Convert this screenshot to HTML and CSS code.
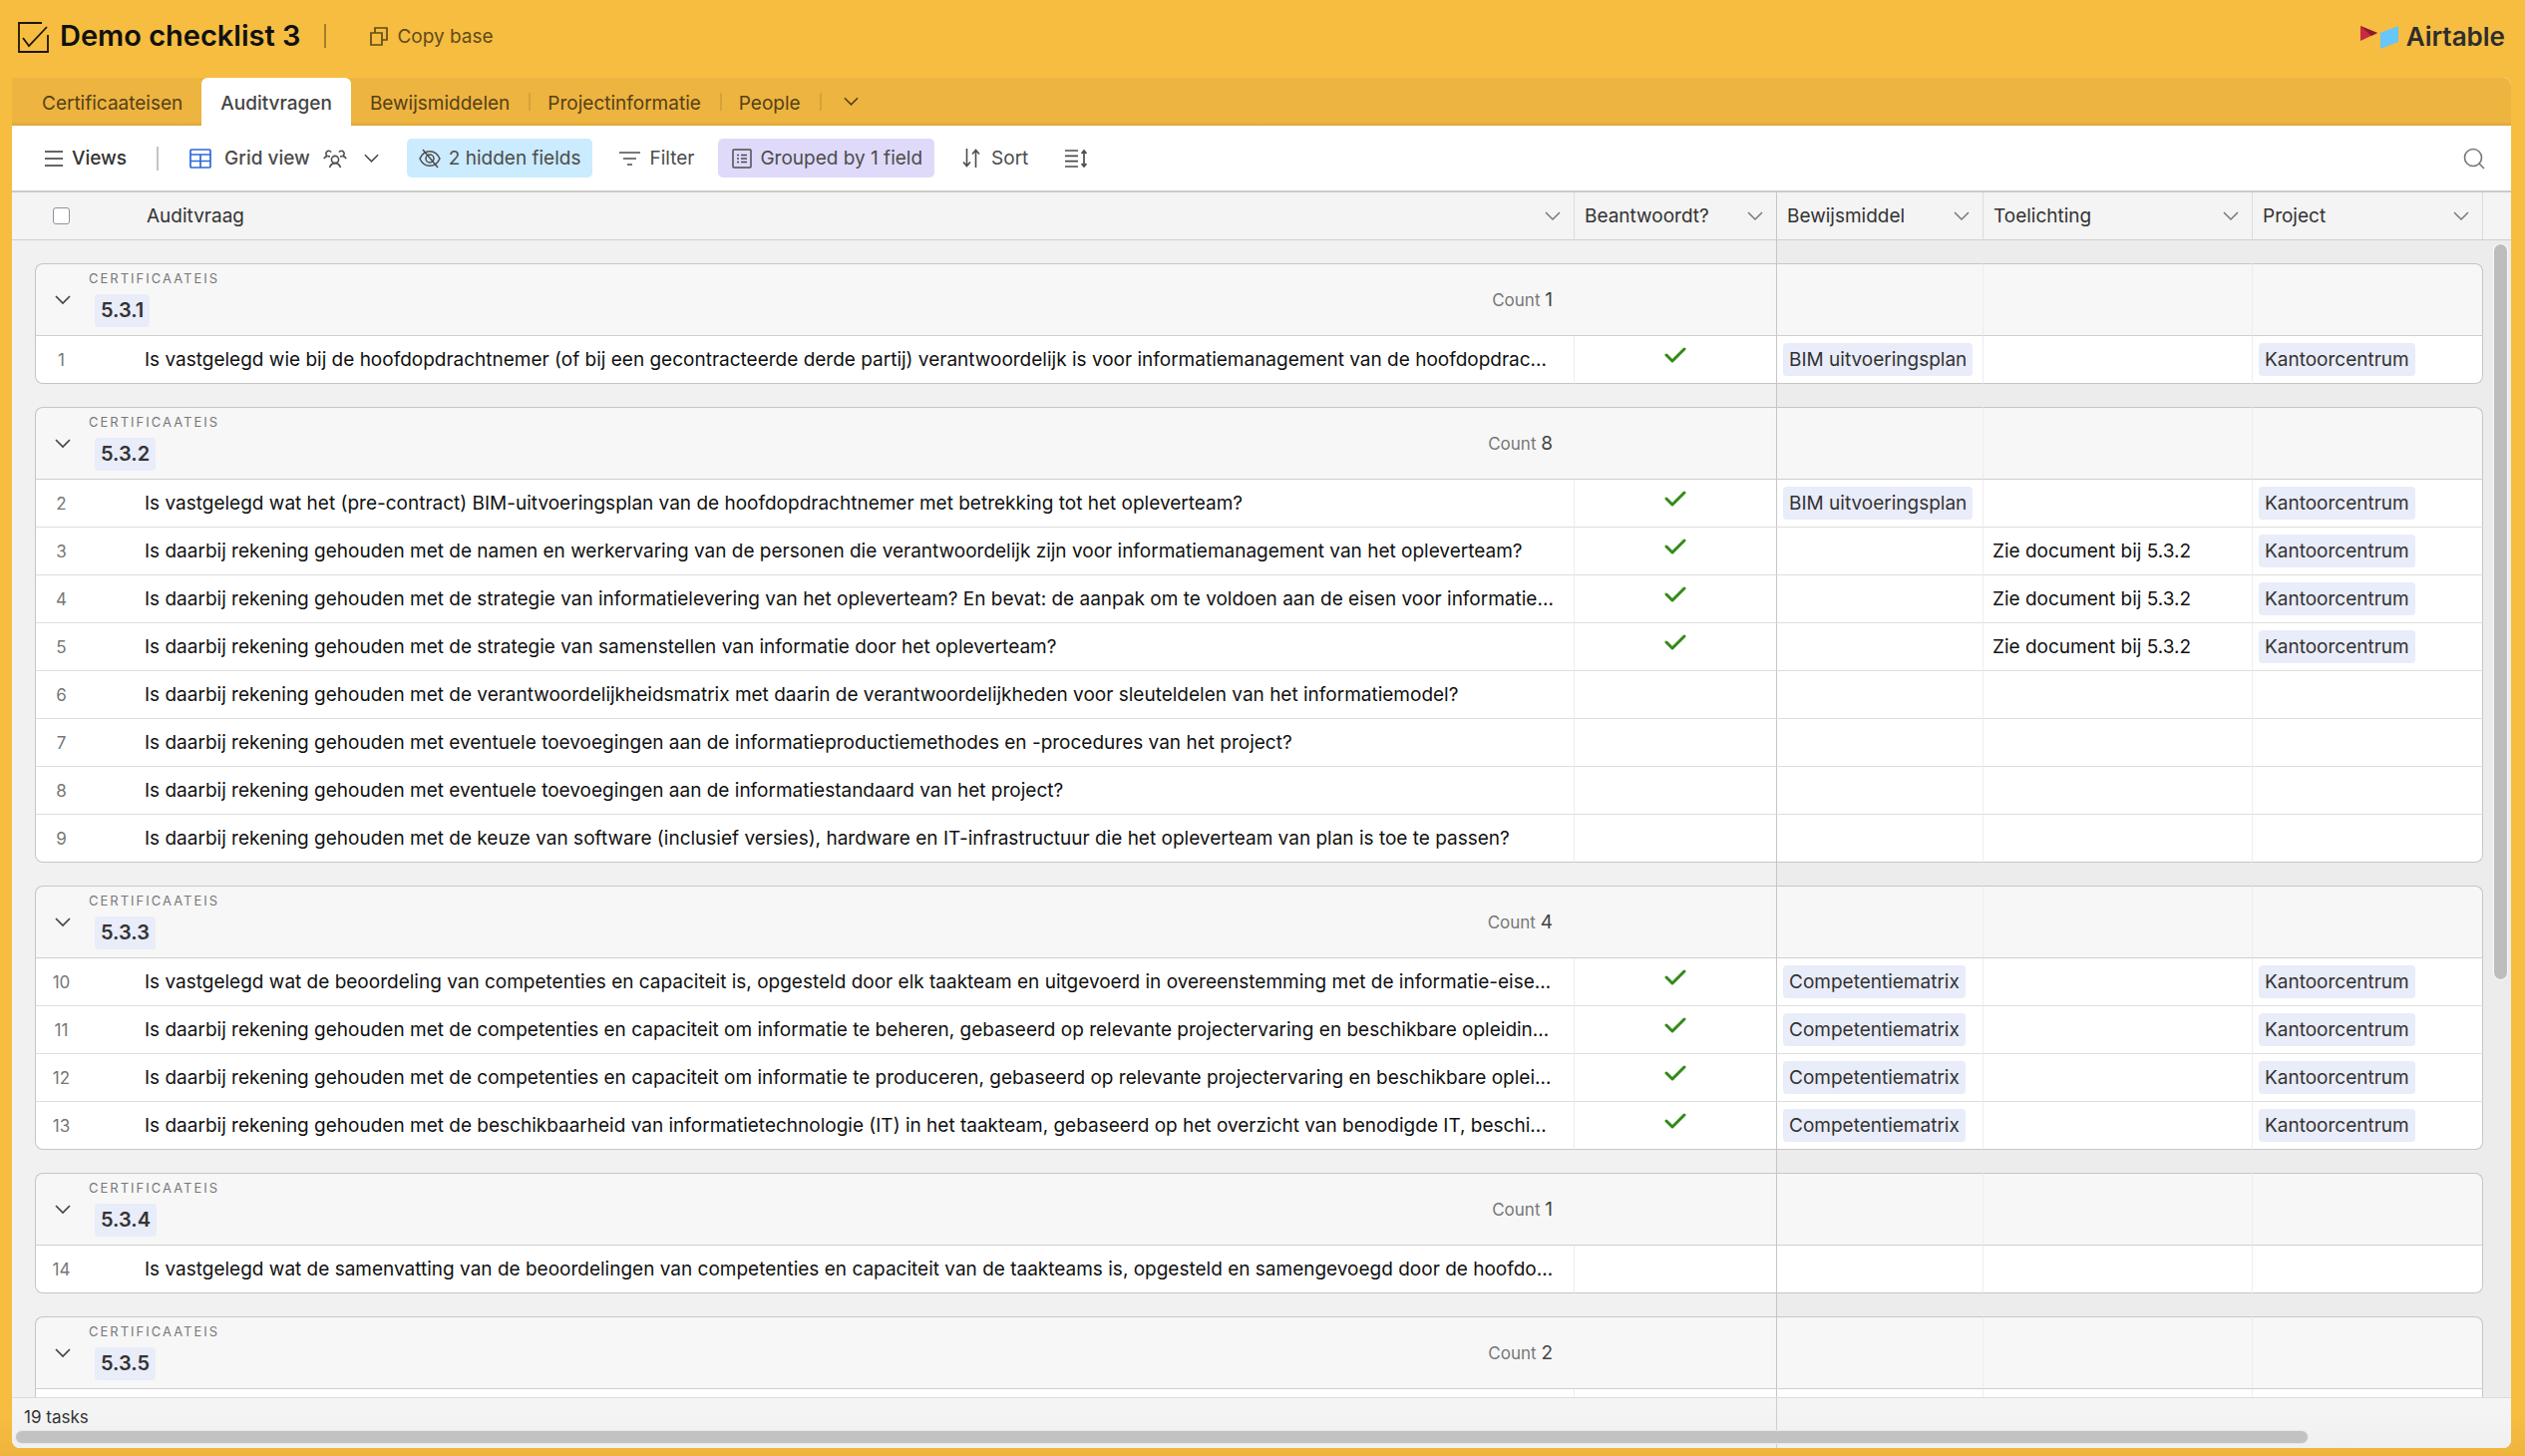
FILE: index.html
```html
<!DOCTYPE html>
<html lang="nl">
<head>
<meta charset="utf-8">
<meta name="viewport" content="width=device-width, initial-scale=1">
<title>Demo checklist 3</title>
<link rel="stylesheet" href="styles.css">
</head>
<body>
<svg class="sprite" aria-hidden="true">
  <symbol id="chevron" viewBox="0 0 16 10"><path d="M1 1l7 7 7-7" fill="none" stroke="currentColor" stroke-width="1.700"/></symbol>
  <symbol id="chevron-thin" viewBox="0 0 16 10"><path d="M1 1l7 7 7-7" fill="none" stroke="currentColor" stroke-width="1.500"/></symbol>
</svg>

<header class="topbar">
  <svg class="base-icon" viewBox="0 0 32 32" fill="none" stroke="currentColor" stroke-width="1.800" aria-hidden="true"><path d="M25 2H2v29h29V14"/><path d="M6 17l6 8L30 6"/></svg>
  <h1 class="base-name">Demo checklist 3</h1>
  <span class="topbar-rule"></span>
  <button class="copy" type="button">
    <svg width="18" height="20" viewBox="0 0 18 20" fill="none" stroke="currentColor" stroke-width="1.700" aria-hidden="true"><path d="M1 6h11v12H1zM5 6V1h12v12h-5"/></svg>
    Copy base
  </button>
  <a class="brand" href="#">
    <svg width="38" height="23" viewBox="0 0 38 23" aria-hidden="true"><path d="M0 0l17 7L0 15z" fill="#c92a42"/><path d="M0 0l17 7-6 3z" fill="#8b1c2c"/><path d="M20 7l18-7v16l-18 7z" fill="#67c6fb"/></svg>
    Airtable
  </a>
</header>

<div class="frame">
  <nav class="tabs" aria-label="Tables">
    <a class="tab" href="#">Certificaateisen</a>
    <a class="tab tab-active" href="#" aria-current="page">Auditvragen</a>
    <a class="tab" href="#">Bewijsmiddelen</a>
    <a class="tab tab-ruled" href="#">Projectinformatie</a>
    <a class="tab tab-ruled" href="#">People</a>
    <button class="tab tab-ruled tab-more" type="button" aria-label="More tables"><svg width="15" height="10"><use href="#chevron"/></svg></button>
  </nav>

  <div class="toolbar">
    <button class="tool tool-views" type="button">
      <svg width="18" height="16" viewBox="0 0 18 16" stroke="#666" stroke-width="2" aria-hidden="true"><path d="M0 1h18M0 8h18M0 15h18"/></svg>
      Views
    </button>
    <span class="toolbar-rule"></span>
    <button class="tool tool-grid" type="button">
      <svg class="grid-glyph" width="22" height="20" viewBox="0 0 22 20" fill="none" stroke="currentColor" stroke-width="1.700" aria-hidden="true"><rect x="1" y="1" width="20" height="18" rx="1"/><path d="M1 6h20M1 12.500h20M11 6v13"/></svg>
      <span class="tool-name">Grid view</span>
      <svg width="24" height="20" viewBox="0 0 24 20" fill="none" stroke="currentColor" stroke-width="1.600" aria-hidden="true"><circle cx="12" cy="11" r="3.600"/><path d="M6.500 19c1-3 3-4.400 5.500-4.400s4.500 1.400 5.500 4.400"/><path d="M8 3.500A2.800 2.800 0 1 0 4.500 7.600C3 7.600 1.600 8.500.8 10M5 7.600l2 .4M16 3.500a2.800 2.800 0 1 1 3.500 4.100c1.500 0 2.900.9 3.700 2.400M19 7.600l-2 .4"/></svg>
      <svg class="grid-caret" width="15" height="10"><use href="#chevron"/></svg>
    </button>
    <button class="tool tool-hidden" type="button">
      <svg width="22" height="20" viewBox="0 0 22 20" fill="none" stroke="currentColor" stroke-width="1.500" aria-hidden="true"><path d="M1 10c2-4.500 5.600-7.300 10-7.300S19 5.500 21 10c-2 4.500-5.600 7.300-10 7.300S3 14.500 1 10z"/><circle cx="11" cy="10" r="4"/><path d="M4 1l15 18"/></svg>
      2 hidden fields
    </button>
    <button class="tool tool-filter" type="button">
      <svg width="22" height="14" viewBox="0 0 22 14" stroke="currentColor" stroke-width="1.700" aria-hidden="true"><path d="M0 1h21M4 7h13M8 13h5"/></svg>
      Filter
    </button>
    <button class="tool tool-group" type="button">
      <svg width="20" height="20" viewBox="0 0 20 20" fill="none" stroke="currentColor" stroke-width="1.500" aria-hidden="true"><rect x="1" y="1" width="18" height="18" rx="1"/><path d="M5 6.500h2M9 6.500h6M5 10h2M9 10h6M5 13.500h2M9 13.500h6"/></svg>
      Grouped by 1 field
    </button>
    <button class="tool tool-sort" type="button">
      <svg width="18" height="19" viewBox="0 0 18 19" fill="none" stroke="currentColor" stroke-width="1.600" aria-hidden="true"><path d="M4.500 0v17M1 13.500l3.500 4 3.500-4M13.500 19V2M10 5.500l3.500-4 3.500 4"/></svg>
      Sort
    </button>
    <button class="tool tool-height" type="button" aria-label="Row height">
      <svg width="22" height="18" viewBox="0 0 22 18" fill="none" stroke="currentColor" stroke-width="1.700" aria-hidden="true"><path d="M0 1h13M0 6.300h13M0 11.600h13M0 17h13M19 1v16M16.500 4L19 1l2.500 3M16.500 14l2.500 3 2.500-3"/></svg>
    </button>
    <button class="search" type="button" aria-label="Search">
      <svg width="22" height="22" viewBox="0 0 22 22" fill="none" stroke="currentColor" stroke-width="1.600" aria-hidden="true"><circle cx="10" cy="10" r="8.500"/><path d="M16 16l5 5"/></svg>
    </button>
  </div>

  <main class="grid">
    <table class="records">
      <colgroup><col class="c-num"><col><col class="c-done"><col class="c-proof"><col class="c-note"><col class="c-project"></colgroup>
      <thead>
        <tr>
          <th class="pick"><input class="box" type="checkbox" aria-label="Select all"></th>
          <th class="h-question"><div class="head">Auditvraag<button type="button" aria-label="Auditvraag menu"><svg width="16" height="10"><use href="#chevron-thin"/></svg></button></div></th>
          <th class="ruled"><div class="head">Beantwoordt?<button type="button" aria-label="Beantwoordt menu"><svg width="16" height="10"><use href="#chevron-thin"/></svg></button></div></th>
          <th class="frozen"><div class="head">Bewijsmiddel<button type="button" aria-label="Bewijsmiddel menu"><svg width="16" height="10"><use href="#chevron-thin"/></svg></button></div></th>
          <th class="ruled"><div class="head">Toelichting<button type="button" aria-label="Toelichting menu"><svg width="16" height="10"><use href="#chevron-thin"/></svg></button></div></th>
          <th class="ruled h-last"><div class="head">Project<button type="button" aria-label="Project menu"><svg width="16" height="10"><use href="#chevron-thin"/></svg></button></div></th>
        </tr>
      </thead>

      <tbody>
        <tr class="gap"><td colspan="3"></td><td colspan="3"></td></tr>
        <tr class="group">
          <td colspan="2"><div class="group-head"><button type="button" aria-label="Collapse 5.3.1"><svg width="16" height="10"><use href="#chevron"/></svg></button><div class="group-id"><span class="caption">Certificaateis</span><span class="tag tag-group">5.3.1</span></div><span class="count">Count <b>1</b></span></div></td>
          <td></td><td></td><td></td><td></td>
        </tr>
        <tr class="row"><td>1</td><td>Is vastgelegd wie bij de hoofdopdrachtnemer (of bij een gecontracteerde derde partij) verantwoordelijk is voor informatiemanagement van de hoofdopdrac…</td><td><input class="tick" type="checkbox" checked aria-label="Beantwoordt 1"></td><td><span class="tag">BIM uitvoeringsplan</span></td><td></td><td><span class="tag">Kantoorcentrum</span></td></tr>
      </tbody>

      <tbody>
        <tr class="gap"><td colspan="3"></td><td colspan="3"></td></tr>
        <tr class="group">
          <td colspan="2"><div class="group-head"><button type="button" aria-label="Collapse 5.3.2"><svg width="16" height="10"><use href="#chevron"/></svg></button><div class="group-id"><span class="caption">Certificaateis</span><span class="tag tag-group">5.3.2</span></div><span class="count">Count <b>8</b></span></div></td>
          <td></td><td></td><td></td><td></td>
        </tr>
        <tr class="row"><td>2</td><td>Is vastgelegd wat het (pre-contract) BIM-uitvoeringsplan van de hoofdopdrachtnemer met betrekking tot het opleverteam?</td><td><input class="tick" type="checkbox" checked aria-label="Beantwoordt 2"></td><td><span class="tag">BIM uitvoeringsplan</span></td><td></td><td><span class="tag">Kantoorcentrum</span></td></tr>
        <tr class="row"><td>3</td><td>Is daarbij rekening gehouden met de namen en werkervaring van de personen die verantwoordelijk zijn voor informatiemanagement van het opleverteam?</td><td><input class="tick" type="checkbox" checked aria-label="Beantwoordt 3"></td><td></td><td>Zie document bij 5.3.2</td><td><span class="tag">Kantoorcentrum</span></td></tr>
        <tr class="row"><td>4</td><td>Is daarbij rekening gehouden met de strategie van informatielevering van het opleverteam? En bevat: de aanpak om te voldoen aan de eisen voor informatie…</td><td><input class="tick" type="checkbox" checked aria-label="Beantwoordt 4"></td><td></td><td>Zie document bij 5.3.2</td><td><span class="tag">Kantoorcentrum</span></td></tr>
        <tr class="row"><td>5</td><td>Is daarbij rekening gehouden met de strategie van samenstellen van informatie door het opleverteam?</td><td><input class="tick" type="checkbox" checked aria-label="Beantwoordt 5"></td><td></td><td>Zie document bij 5.3.2</td><td><span class="tag">Kantoorcentrum</span></td></tr>
        <tr class="row"><td>6</td><td>Is daarbij rekening gehouden met de verantwoordelijkheidsmatrix met daarin de verantwoordelijkheden voor sleuteldelen van het informatiemodel?</td><td><input class="tick" type="checkbox" aria-label="Beantwoordt 6"></td><td></td><td></td><td></td></tr>
        <tr class="row"><td>7</td><td>Is daarbij rekening gehouden met eventuele toevoegingen aan de informatieproductiemethodes en -procedures van het project?</td><td><input class="tick" type="checkbox" aria-label="Beantwoordt 7"></td><td></td><td></td><td></td></tr>
        <tr class="row"><td>8</td><td>Is daarbij rekening gehouden met eventuele toevoegingen aan de informatiestandaard van het project?</td><td><input class="tick" type="checkbox" aria-label="Beantwoordt 8"></td><td></td><td></td><td></td></tr>
        <tr class="row"><td>9</td><td>Is daarbij rekening gehouden met de keuze van software (inclusief versies), hardware en IT-infrastructuur die het opleverteam van plan is toe te passen?</td><td><input class="tick" type="checkbox" aria-label="Beantwoordt 9"></td><td></td><td></td><td></td></tr>
      </tbody>

      <tbody>
        <tr class="gap"><td colspan="3"></td><td colspan="3"></td></tr>
        <tr class="group">
          <td colspan="2"><div class="group-head"><button type="button" aria-label="Collapse 5.3.3"><svg width="16" height="10"><use href="#chevron"/></svg></button><div class="group-id"><span class="caption">Certificaateis</span><span class="tag tag-group">5.3.3</span></div><span class="count">Count <b>4</b></span></div></td>
          <td></td><td></td><td></td><td></td>
        </tr>
        <tr class="row"><td>10</td><td>Is vastgelegd wat de beoordeling van competenties en capaciteit is, opgesteld door elk taakteam en uitgevoerd in overeenstemming met de informatie-eise…</td><td><input class="tick" type="checkbox" checked aria-label="Beantwoordt 10"></td><td><span class="tag">Competentiematrix</span></td><td></td><td><span class="tag">Kantoorcentrum</span></td></tr>
        <tr class="row"><td>11</td><td>Is daarbij rekening gehouden met de competenties en capaciteit om informatie te beheren, gebaseerd op relevante projectervaring en beschikbare opleidin…</td><td><input class="tick" type="checkbox" checked aria-label="Beantwoordt 11"></td><td><span class="tag">Competentiematrix</span></td><td></td><td><span class="tag">Kantoorcentrum</span></td></tr>
        <tr class="row"><td>12</td><td>Is daarbij rekening gehouden met de competenties en capaciteit om informatie te produceren, gebaseerd op relevante projectervaring en beschikbare oplei…</td><td><input class="tick" type="checkbox" checked aria-label="Beantwoordt 12"></td><td><span class="tag">Competentiematrix</span></td><td></td><td><span class="tag">Kantoorcentrum</span></td></tr>
        <tr class="row"><td>13</td><td>Is daarbij rekening gehouden met de beschikbaarheid van informatietechnologie (IT) in het taakteam, gebaseerd op het overzicht van benodigde IT, beschi…</td><td><input class="tick" type="checkbox" checked aria-label="Beantwoordt 13"></td><td><span class="tag">Competentiematrix</span></td><td></td><td><span class="tag">Kantoorcentrum</span></td></tr>
      </tbody>

      <tbody>
        <tr class="gap"><td colspan="3"></td><td colspan="3"></td></tr>
        <tr class="group">
          <td colspan="2"><div class="group-head"><button type="button" aria-label="Collapse 5.3.4"><svg width="16" height="10"><use href="#chevron"/></svg></button><div class="group-id"><span class="caption">Certificaateis</span><span class="tag tag-group">5.3.4</span></div><span class="count">Count <b>1</b></span></div></td>
          <td></td><td></td><td></td><td></td>
        </tr>
        <tr class="row"><td>14</td><td>Is vastgelegd wat de samenvatting van de beoordelingen van competenties en capaciteit van de taakteams is, opgesteld en samengevoegd door de hoofdo…</td><td><input class="tick" type="checkbox" aria-label="Beantwoordt 14"></td><td></td><td></td><td></td></tr>
      </tbody>

      <tbody>
        <tr class="gap"><td colspan="3"></td><td colspan="3"></td></tr>
        <tr class="group">
          <td colspan="2"><div class="group-head"><button type="button" aria-label="Collapse 5.3.5"><svg width="16" height="10"><use href="#chevron"/></svg></button><div class="group-id"><span class="caption">Certificaateis</span><span class="tag tag-group">5.3.5</span></div><span class="count">Count <b>2</b></span></div></td>
          <td></td><td></td><td></td><td></td>
        </tr>
        <tr class="row"><td></td><td></td><td></td><td></td><td></td><td></td></tr>
      </tbody>
    </table>
    <div class="scroll-y"></div>
  </main>

  <footer class="summary">
    <span>19 tasks</span>
    <div class="scroll-x"></div>
  </footer>
</div>
</body>
</html>
```
FILE: styles.css
```css
* { box-sizing: border-box; }

body {
  margin: 0;
  height: 100vh;
  display: flex;
  flex-direction: column;
  overflow: hidden;
  background: linear-gradient(#f6bd41 0, #f6bd41 calc(100% - 40px), #eeb43d 100%);
  color: #111;
  font: 19px/28px Inter, "Liberation Sans", sans-serif;
}

button {
  font: inherit;
  color: inherit;
  background: none;
  border: 0;
  padding: 0;
}

a { color: inherit; text-decoration: none; }
svg { flex: none; display: block; }
.sprite { position: absolute; width: 0; height: 0; }

/* Top bar */
.topbar {
  flex: none;
  height: 78px;
  padding: 0 20px 4px 17px;
  display: flex;
  align-items: center;
}
.base-icon { width: 32px; height: 32px; color: #1d1705; }
.base-name {
  margin: 0 0 2px 11px;
  font-size: 29px;
  line-height: 40px;
  font-weight: 600;
  white-space: nowrap;
  color: #111;
}
.topbar-rule {
  width: 2px;
  height: 24px;
  margin: 0 44px 2px 24px;
  background: #a37e2b;
}
.copy {
  display: flex;
  align-items: center;
  gap: 9px;
  color: #624b1a;
}
.brand {
  margin-left: auto;
  display: flex;
  align-items: center;
  gap: 8px;
  font-size: 26px;
  font-weight: 600;
  color: #2d2d2d;
}

/* Window frame */
.frame {
  flex: 1;
  min-height: 0;
  margin: 0 14px 8px 12px;
  display: flex;
  flex-direction: column;
  overflow: hidden;
  border-radius: 0 8px 8px 8px;
  background: #fff;
}

.tabs {
  flex: none;
  height: 48px;
  padding-left: 11px;
  display: flex;
  background: linear-gradient(#edb440 44px, #dca63a 48px);
  color: #554117;
}
.tab {
  position: relative;
  display: flex;
  align-items: center;
  padding: 3px 19px 0;
}
.tab-active {
  background: #fff;
  border-radius: 6px 6px 0 0;
  color: #444;
  font-weight: 500;
}
.tab-ruled::before {
  content: "";
  position: absolute;
  left: 0;
  top: 15px;
  width: 2px;
  height: 18px;
  background: #d6a23a;
}
.tab-more { padding: 0 24px; }

/* Toolbar */
.toolbar {
  flex: none;
  height: 67px;
  padding: 0 26px 0 33px;
  display: flex;
  align-items: center;
  border-bottom: 2px solid #cbcbcb;
  color: #4c4c4c;
}
.tool {
  height: 39px;
  display: flex;
  align-items: center;
  gap: 8px;
  border-radius: 5px;
  white-space: nowrap;
}
.tool-views { gap: 9px; color: #333; font-weight: 500; }
.toolbar-rule {
  width: 2px;
  height: 24px;
  margin: 0 31px 0 30px;
  background: #c4c4c4;
}
.tool-grid { gap: 13px; }
.tool-name { font-weight: 500; }
.grid-glyph { color: #2d68d8; }
.grid-caret { margin-left: 4px; }
.tool-hidden { margin-left: 28px; padding: 0 12px; background: #cbebfe; }
.tool-filter { margin-left: 27px; }
.tool-group { margin-left: 24px; padding: 0 12px 0 14px; background: #dfdafa; }
.tool-sort { margin-left: 28px; gap: 11px; }
.tool-height { margin-left: 37px; }
.search { margin-left: auto; color: #777; }

/* Record grid: the side gutters carry the header band */
.grid {
  position: relative;
  flex: 1;
  min-height: 0;
  overflow: hidden;
  padding: 0 28px 0 23px;
  background:
    linear-gradient(#f4f4f4 47px, #cfcfcf 47px) 0 0 / 100% 48px no-repeat,
    linear-gradient(to right, #f1f1f1 50%, #ececec 50%);
}
.records {
  width: 100%;
  table-layout: fixed;
  border-collapse: separate;
  border-spacing: 0;
}
.c-num { width: 52px; }
.c-done { width: 203px; }
.c-proof { width: 207px; }
.c-note { width: 270px; }
.c-project { width: 232px; }

td, th { padding: 0; text-align: left; font-weight: 400; }

th {
  height: 48px;
  border-bottom: 1px solid #cfcfcf;
  background: #f4f4f4;
  color: #333;
}
.ruled { border-left: 1px solid #dcdcdc; }
.frozen { border-left: 1px solid #c6c6c6; }
.h-last { border-right: 1px solid #dcdcdc; }
.pick { text-align: center; }
.head {
  display: flex;
  align-items: center;
  justify-content: space-between;
  padding: 0 13px 0 10px;
}
.head button { color: #777; }
.h-question .head { padding-left: 60px; }
.box {
  appearance: none;
  display: block;
  width: 17px;
  height: 17px;
  margin: 0 auto;
  border: 1px solid #8b939c;
  border-radius: 3px;
  background: #fff;
}

.gap td { height: 23px; background: #f1f1f1; }
.gap td + td { background: #ececec; border-left: 1px solid #c6c6c6; }

.group td {
  height: 73px;
  border-top: 1px solid #c6c6c6;
  border-bottom: 1px solid #cfcfcf;
  background: #f7f7f7;
}
.group td:first-child { border-left: 1px solid #c6c6c6; border-top-left-radius: 8px; }
.group td:nth-child(3) { border-left: 1px solid #c6c6c6; }
.group td:nth-child(n+4) { border-left: 1px solid #ececec; }
.group td:last-child { border-right: 1px solid #c6c6c6; border-top-right-radius: 8px; }
.group-head {
  height: 71px;
  padding: 0 21px 0 19px;
  display: flex;
  align-items: center;
  color: #444;
}
.group-id {
  padding: 0 0 4px 18px;
  display: flex;
  flex-direction: column;
  align-items: flex-start;
  gap: 6px;
}
.caption {
  font-size: 13px;
  line-height: 20px;
  letter-spacing: 2px;
  text-transform: uppercase;
  color: #777;
}
.count { margin-left: auto; font-size: 17px; color: #777; }
.count b { font-size: 19px; font-weight: 400; color: #444; }

.row td {
  height: 48px;
  border-bottom: 1px solid #dedede;
  background: #fff;
  white-space: nowrap;
}
.row td:nth-child(1) {
  border-left: 1px solid #c6c6c6;
  font-size: 17px;
  text-align: center;
  color: #777;
}
.row td:nth-child(2) {
  padding: 1px 10px 0 58px;
  overflow: hidden;
  text-overflow: ellipsis;
}
.row td:nth-child(3) { border-left: 1px solid #eee; text-align: center; }
.row td:nth-child(4) { border-left: 1px solid #c6c6c6; padding-left: 6px; }
.row td:nth-child(5) { border-left: 1px solid #eee; padding: 1px 0 0 9px; }
.row td:nth-child(6) { border-left: 1px solid #eee; border-right: 1px solid #c6c6c6; padding-left: 6px; }
.row:last-child td { border-bottom-color: #c6c6c6; }
.row:last-child td:first-child { border-bottom-left-radius: 8px; }
.row:last-child td:last-child { border-bottom-right-radius: 8px; }

.tag {
  display: block;
  width: fit-content;
  padding: 0 6px;
  line-height: 33px;
  border-radius: 4px;
  background: #e9ecf9;
  color: #333;
}
.tag-group {
  margin-left: 6px;
  font-size: 20px;
  font-weight: 600;
}
.tick {
  appearance: none;
  display: block;
  width: 22px;
  height: 16px;
  margin: 0 auto 10px;
}
.tick:checked {
  background: url("data:image/svg+xml,%3Csvg xmlns='http://www.w3.org/2000/svg' viewBox='0 0 22 16'%3E%3Cpath d='M2 8l6 6L20 2' fill='none' stroke='%23338a17' stroke-width='3' stroke-linecap='round' stroke-linejoin='round'/%3E%3C/svg%3E") center / contain no-repeat;
}

.scroll-y {
  position: absolute;
  top: 52px;
  right: 4px;
  width: 13px;
  height: 61%;
  border-radius: 7px;
  background: #bdbdbd;
  box-shadow: 0 0 0 1px #f8f8f8;
}

/* Summary bar */
.summary {
  flex: none;
  height: 51px;
  padding: 5px 4px 0;
  border-top: 1px solid #dcdcdc;
  background:
    linear-gradient(#cfcfcf, #cfcfcf) right 736px top 0 / 1px 100% no-repeat,
    linear-gradient(#f5f5f5, #f0f0f0);
  font-size: 17px;
  color: #333;
}
.summary span { display: block; padding-left: 8px; }
.scroll-x {
  width: 92%;
  height: 12px;
  border-radius: 6px;
  background: #c2c2c2;
  box-shadow: 0 0 0 1px #e8e8e8;
}
```
